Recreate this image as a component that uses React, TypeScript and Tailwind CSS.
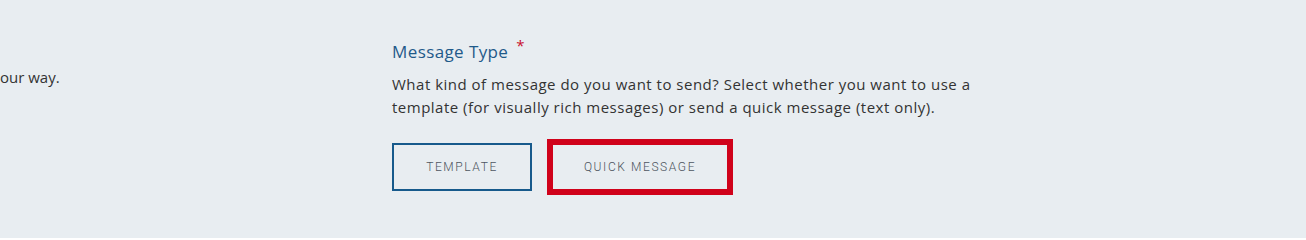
import { useState } from 'react';

export default function App() {
  const [type, setType] = useState<'template' | 'quick'>('quick');

  return (
    <div className="w-[1306px] h-[238px] overflow-hidden bg-[#e8edf1] font-['Open_Sans',sans-serif] text-[#333]">
      <div className="flex pt-[40px]">
        <div className="w-[392px] shrink-0 pt-[26px]">
          <p className="text-[15px] leading-[22px] text-[#333]">our way.</p>
        </div>
        <div className="w-[640px]">
          <div className="flex items-start">
            <h2 className="text-[17px] leading-[24px] tracking-[0.4px] text-[#1f5a8a]">Message Type</h2>
            <span className="ml-[8px] -mt-[2px] text-[15px] leading-[15px] text-[#c8102e]">*</span>
          </div>
          <p className="mt-[9px] text-[15px] leading-[23px] tracking-[0.5px] text-[#333]">
            What kind of message do you want to send? Select whether you want to use a
            <br />
            template (for visually rich messages) or send a quick message (text only).
          </p>
          <div className="mt-[24px] flex items-center">
            <button
              onClick={() => setType('template')}
              className={
                type === 'template'
                  ? "h-[48px] w-[140px] border-2 border-[#d0021b] outline-4 outline-[#d0021b] font-['Roboto',sans-serif] text-[12px] font-light tracking-[1.6px] text-[#4d5560]"
                  : "h-[48px] w-[140px] border-2 border-[#175a8c] font-['Roboto',sans-serif] text-[12px] font-light tracking-[1.6px] text-[#4d5560]"
              }
            >
              TEMPLATE
            </button>
            <button
              onClick={() => setType('quick')}
              className={
                type === 'quick'
                  ? "ml-[19px] h-[48px] w-[178px] border-2 border-[#d0021b] outline-4 outline-[#d0021b] font-['Roboto',sans-serif] text-[12px] font-light tracking-[1.6px] text-[#4d5560]"
                  : "ml-[19px] h-[48px] w-[178px] border-2 border-[#175a8c] font-['Roboto',sans-serif] text-[12px] font-light tracking-[1.6px] text-[#4d5560]"
              }
            >
              QUICK MESSAGE
            </button>
          </div>
        </div>
      </div>
    </div>
  );
}
